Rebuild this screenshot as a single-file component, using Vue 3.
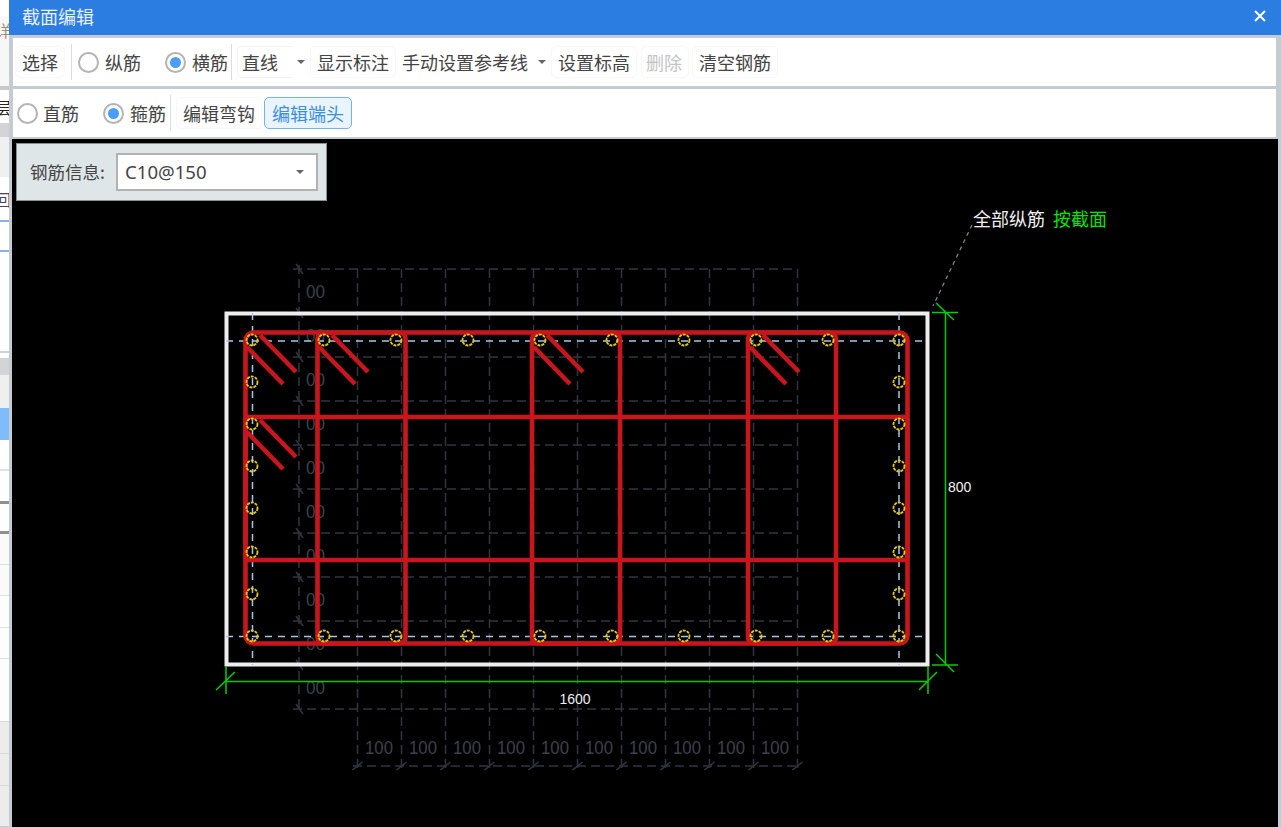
<template>
  <div class="page">
    <aside class="strip">
      <div
        v-for="(row, i) in stripRows"
        :key="i"
        class="strip-row"
        :style="{ height: row.h + 'px', background: row.bg }"
      >
        <span v-if="row.text" class="strip-text" :style="{ color: row.color }">{{ row.text }}</span>
      </div>
    </aside>

    <section class="window">
      <header class="title-bar">
        <span class="title">截面编辑</span>
        <svg class="close" width="14" height="14" viewBox="0 0 14 14">
          <path d="M2 2 L12 12 M12 2 L2 12" stroke="#fff" stroke-width="2" fill="none" />
        </svg>
      </header>

      <div class="toolbar row-one">
        <button class="btn">选择</button>
        <i class="sep sep-a"></i>
        <label class="radio first"><i class="dot"></i><span>纵筋</span></label>
        <label class="radio second"><i class="dot on"></i><span>横筋</span></label>
        <i class="sep sep-b"></i>
        <div class="select-inline">
          <span class="select-box">直线</span>
          <i class="caret"></i>
        </div>
        <button class="btn">显示标注</button>
        <div class="menu-text">
          <span>手动设置参考线</span>
          <i class="caret"></i>
        </div>
        <button class="btn">设置标高</button>
        <button class="btn disabled">删除</button>
        <button class="btn">清空钢筋</button>
      </div>

      <div class="toolbar row-two">
        <label class="radio"><i class="dot"></i><span>直筋</span></label>
        <label class="radio second-b"><i class="dot on"></i><span>箍筋</span></label>
        <i class="sep sep-c"></i>
        <button class="btn">编辑弯钩</button>
        <button class="btn active">编辑端头</button>
      </div>

      <div class="canvas">
        <svg class="drawing" width="1266" height="688" viewBox="12 139 1266 688">
          <!-- grid -->
          <g stroke="#2f3642" stroke-width="1.5" stroke-dasharray="9 5" fill="none">
            <line v-for="y in gridY" :key="'gy' + y" x1="293" :y1="y" x2="797" :y2="y" />
            <line x1="299" y1="265" x2="299" y2="712" />
            <line v-for="x in gridX" :key="'gx' + x" :x1="x" y1="269" :x2="x" y2="772" />
            <line x1="353" y1="766" x2="801" y2="766" />
          </g>
          <g stroke="#2f3642" stroke-width="1.5">
            <line v-for="y in gridY" :key="'ty' + y" x1="296" :y1="y - 5" x2="303" :y2="y + 5" />
            <line v-for="x in gridX" :key="'tx' + x" :x1="x - 5" y1="770" :x2="x + 5" y2="762" />
          </g>
          <g class="grid-text">
            <text v-for="y in leftLabels" :key="'l' + y" x="306" :y="y" textLength="19" lengthAdjust="spacingAndGlyphs">00</text>
            <text v-for="x in bottomLabels" :key="'b' + x" :x="x - 14" y="754" textLength="28" lengthAdjust="spacingAndGlyphs">100</text>
          </g>

          <!-- section outline -->
          <rect x="226.5" y="313.5" width="701" height="351" fill="none" stroke="#eeeeee" stroke-width="4" />

          <!-- reference lines -->
          <g stroke="#a7c6e6" stroke-width="1.5" stroke-dasharray="7 6" fill="none">
            <line x1="226" y1="341" x2="928" y2="341" />
            <line x1="226" y1="636.5" x2="928" y2="636.5" />
            <line x1="252.5" y1="313" x2="252.5" y2="665" />
            <line x1="899" y1="313" x2="899" y2="665" />
          </g>

          <!-- rebar -->
          <g stroke="#c8161e" stroke-width="4.6" fill="none">
            <rect x="245.5" y="332.5" width="662" height="311" rx="8" />
            <rect x="245.5" y="417" width="662" height="143" rx="3" />
            <rect x="317.5" y="332.5" width="88" height="311" rx="6" />
            <rect x="532" y="332.5" width="88" height="311" rx="6" />
            <rect x="748" y="332.5" width="88" height="311" rx="6" />
            <line v-for="(h, i) in hooks" :key="'h' + i" :x1="h[0]" :y1="h[1]" :x2="h[2]" :y2="h[3]" />
          </g>
          <g stroke="#e6cb12" stroke-width="1.8" fill="none" stroke-dasharray="3 1">
            <circle v-for="p in points" :key="p.key" :cx="p.x" :cy="p.y" r="5.5" />
          </g>

          <!-- dimensions -->
          <g stroke="#00cf00" stroke-width="1.5" fill="none">
            <path d="M226 681.5 H928 M226 666 V694 M928 666 V694 M216 690 L235 672 M919 690 L937 672" />
            <path d="M945.5 312 V665 M932 312.5 H958 M932 665 H958 M936 303 L954 320 M936 654 L954 672" />
          </g>
          <path d="M972 225 L933 306" stroke="#8a8a8a" stroke-width="1.2" stroke-dasharray="4 4" fill="none" />
          <text class="dim-text" x="948" y="492">800</text>
          <text class="dim-text" x="575" y="704" text-anchor="middle">1600</text>
          <text class="note" x="973" y="226">全部纵筋</text>
          <text class="note green" x="1053" y="226">按截面</text>
        </svg>

        <div class="info-panel">
          <span class="info-label">钢筋信息:</span>
          <div class="info-select">
            <span>C10@150</span>
            <i class="caret"></i>
          </div>
        </div>
      </div>
    </section>
  </div>
</template>

<script setup>
const stripRows = [
  { h: 16, bg: "#ffffff" },
  { h: 28, bg: "#f7f7f7", text: "详", color: "#a98a78" },
  { h: 42, bg: "#f7f7f7" },
  { h: 4, bg: "#c9c9c9" },
  { h: 33, bg: "#ffffff", text: "层", color: "#222" },
  { h: 14, bg: "#d2d4d8" },
  { h: 40, bg: "#f0f0f0" },
  { h: 43, bg: "#ffffff", text: "回", color: "#446" },
  { h: 2, bg: "#8ab0e8" },
  { h: 28, bg: "#ffffff" },
  { h: 2, bg: "#8ab0e8" },
  { h: 99, bg: "#ffffff" },
  { h: 2, bg: "#d0d0d0" },
  { h: 5, bg: "#ffffff" },
  { h: 17, bg: "#d2d4d8" },
  { h: 33, bg: "#efefef" },
  { h: 32, bg: "#7fbcfb" },
  { h: 29, bg: "#ffffff" },
  { h: 2, bg: "#e0e0e0" },
  { h: 30, bg: "#ffffff" },
  { h: 3, bg: "#8f8f8f" },
  { h: 27, bg: "#ffffff" },
  { h: 3, bg: "#8f8f8f" },
  { h: 30, bg: "#fafafa" },
  { h: 1, bg: "#e0e0e0" },
  { h: 30, bg: "#fafafa" },
  { h: 1, bg: "#e0e0e0" },
  { h: 31, bg: "#fdfdfd" },
  { h: 1, bg: "#e0e0e0" },
  { h: 30, bg: "#fdfdfd" },
  { h: 1, bg: "#e0e0e0" },
  { h: 62, bg: "#fdfdfd" },
  { h: 1, bg: "#d8d8d8" },
  { h: 31, bg: "#ececec" },
  { h: 1, bg: "#d8d8d8" },
  { h: 31, bg: "#ececec" },
  { h: 1, bg: "#d8d8d8" },
  { h: 40, bg: "#ececec" },
];

const gridY = Array.from({ length: 11 }, (_, i) => 269 + i * 44);
const gridX = Array.from({ length: 11 }, (_, i) => 357.5 + i * 44);
const leftLabels = Array.from({ length: 10 }, (_, i) => 298 + i * 44);
const bottomLabels = Array.from({ length: 10 }, (_, i) => 379 + i * 44);

const hookAt = (x, y) => [
  [x + 15, y + 3, x + 51, y + 40],
  [x + 2, y + 15, x + 38, y + 52],
];
const hooks = [
  ...hookAt(245, 332),
  ...hookAt(317, 332),
  ...hookAt(532, 332),
  ...hookAt(748, 332),
  ...hookAt(245, 417),
];

const topX = [252, 324, 396, 468, 540, 612, 684, 756, 828, 899];
const sideY = [382, 424, 466, 508, 552, 594];
const points = [
  ...topX.map((x) => ({ key: "t" + x, x, y: 340 })),
  ...topX.map((x) => ({ key: "b" + x, x, y: 636 })),
  ...sideY.map((y) => ({ key: "l" + y, x: 252, y })),
  ...sideY.map((y) => ({ key: "r" + y, x: 899, y })),
];
</script>

<style>
html,
body {
  margin: 0;
  height: 100%;
  overflow: hidden;
}
</style>

<style scoped>
.page {
  display: flex;
  width: 1281px;
  height: 827px;
  overflow: hidden;
  background: #c6cbd2;
  font-family: "Noto Sans CJK SC", "Noto Sans", sans-serif;
  font-size: 18px;
  color: #444;
}
.strip {
  width: 9px;
  flex: none;
  overflow: hidden;
}
.strip-row {
  position: relative;
  overflow: hidden;
}
.strip-text {
  position: absolute;
  right: -2px;
  top: 50%;
  transform: translateY(-50%);
  font-size: 16px;
  line-height: 1;
}
.window {
  flex: 1;
  display: flex;
  flex-direction: column;
}
.title-bar {
  height: 35px;
  box-sizing: border-box;
  flex: none;
  display: flex;
  align-items: center;
  justify-content: space-between;
  padding: 0 14px 4px 13px;
  background: #2b7de1;
  margin-bottom: 3px;
}
.title {
  color: #e8f1fc;
  line-height: 1;
}
.toolbar {
  display: flex;
  align-items: center;
  height: 48px;
  flex: none;
  margin: 0 5px 3px 4px;
  background: #fff;
}
.row-one {
  padding-left: 2px;
}
.row-two {
  margin-bottom: 2px;
}
.btn {
  height: 32px;
  padding: 0 6px;
  border: 1px solid #f8f8f8;
  border-radius: 5px;
  background: #fff;
  color: #444;
  font: inherit;
  line-height: 1;
  white-space: nowrap;
}
.btn.disabled {
  padding: 0 6px 0 4px;
  margin: 0 3px 0 4px;
  color: #c4c4c4;
}
.btn.active {
  margin-left: 2px;
  padding: 0 7px;
  border-color: #74b2f2;
  background: #e9f4ff;
  color: #3a8ee6;
}
.sep {
  width: 1px;
  height: 36px;
  flex: none;
  background: #dcdcdc;
}
.sep-a {
  margin: 0 6px 0 6px;
}
.sep-b {
  margin: 0 5px 0 3px;
}
.sep-c {
  margin: 0 5px 0 4px;
}
.radio {
  display: flex;
  align-items: center;
  gap: 6px;
  line-height: 1;
}
.second {
  margin-left: 24px;
}
.second-b {
  margin-left: 24px;
}
.row-two .radio:first-child {
  margin-left: 4px;
  gap: 5px;
}
.dot {
  width: 21px;
  height: 21px;
  box-sizing: border-box;
  border: 2px solid #b4b4b4;
  border-radius: 50%;
  background: #fff;
  position: relative;
  flex: none;
}
.dot.on::after {
  content: "";
  position: absolute;
  left: 3px;
  top: 3px;
  width: 11px;
  height: 11px;
  border-radius: 50%;
  background: #4a9df8;
}
.caret {
  width: 0;
  height: 0;
  flex: none;
  border-left: 4px solid transparent;
  border-right: 4px solid transparent;
  border-top: 4px solid #666;
}
.select-inline {
  width: 73px;
  display: flex;
  align-items: center;
  flex: none;
}
.select-box {
  width: 56px;
  height: 32px;
  box-sizing: border-box;
  padding-left: 4px;
  line-height: 30px;
  border: 1px solid #f4f4f4;
  border-right: 0;
  border-radius: 5px 0 0 5px;
  margin-right: 4px;
}
.menu-text {
  display: flex;
  align-items: center;
  gap: 10px;
  margin: 0 5px 0 6px;
  line-height: 1;
}
.canvas {
  position: relative;
  flex: 1;
  margin: 0 3px;
  background: #000;
  overflow: hidden;
}
.drawing {
  display: block;
}
.grid-text text {
  fill: #3b424e;
  font-family: "Liberation Sans", sans-serif;
  font-size: 18px;
}
.dim-text {
  fill: #f0f0f0;
  font-family: "Liberation Sans", sans-serif;
  font-size: 14px;
}
.note {
  fill: #f0f0f0;
  font-family: "Noto Sans CJK SC", sans-serif;
  font-size: 18px;
}
.note.green {
  fill: #00e600;
}
.info-panel {
  position: absolute;
  left: 4px;
  top: 4px;
  width: 311px;
  height: 58px;
  box-sizing: border-box;
  padding: 0 8px 0 13px;
  display: flex;
  align-items: center;
  justify-content: space-between;
  background: #dfe6e8;
  border: 1px solid #8b8f92;
}
.info-label {
  font-size: 17.5px;
  line-height: 1;
  white-space: nowrap;
}
.info-select {
  width: 202px;
  height: 38px;
  box-sizing: border-box;
  display: flex;
  align-items: center;
  justify-content: space-between;
  padding: 0 12px 0 7px;
  background: #fff;
  border: 2px solid #b2b2b2;
  font-family: "Noto Sans", sans-serif;
  font-size: 18.6px;
  line-height: 1;
}
</style>
